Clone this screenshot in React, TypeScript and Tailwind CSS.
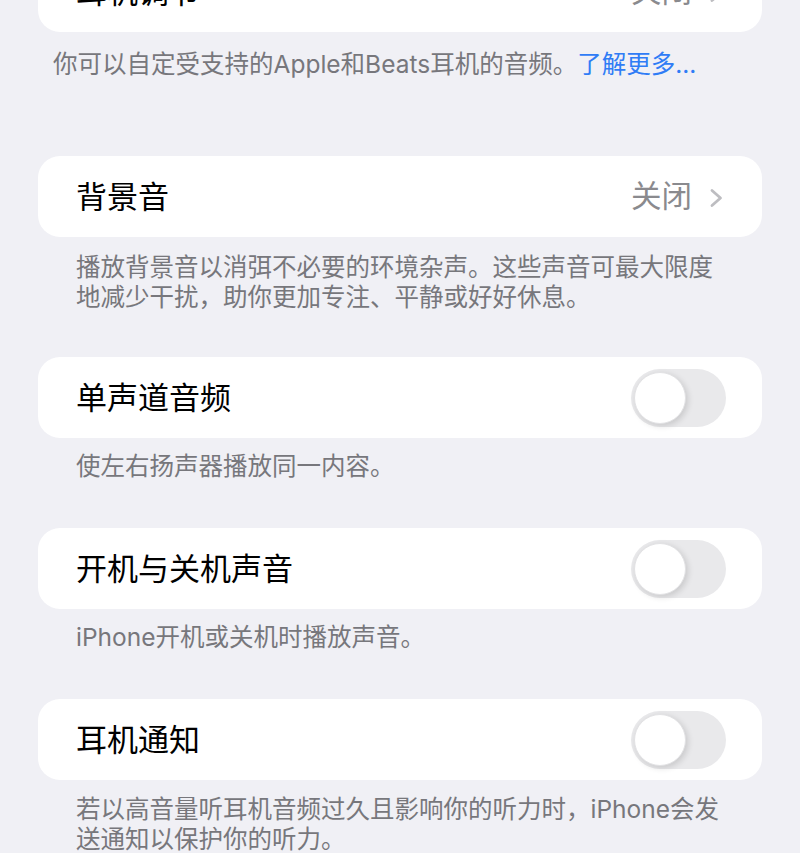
const font = { fontFamily: 'Inter, "Noto Sans CJK SC", sans-serif' };

function Toggle() {
  return (
    <div className="flex h-[58px] w-[95px] items-center rounded-full bg-[#e9e9eb] p-[3px]">
      <div className="h-[52px] w-[52px] rounded-full border border-[#e2e2e4] bg-white shadow-[2px_2px_6px_rgba(0,0,0,0.14)]" />
    </div>
  );
}

function Card({ title, right }: { title: string; right: React.ReactNode }) {
  return (
    <div className="mx-[38px] flex h-[81px] items-center justify-between rounded-[22px] bg-white pl-[38px] pr-[36px]">
      <span className="text-[31px] leading-none text-black">{title}</span>
      {right}
    </div>
  );
}

// "关闭 >" disclosure value
function Value({ label }: { label: string }) {
  return (
    <div className="flex items-center gap-[17px] pr-[2px] text-[#8a8a8e]">
      <span className="text-[30.5px] leading-none">{label}</span>
      <svg width="15" height="20" viewBox="0 0 15 20" fill="none" className="mt-[2px]">
        <polyline
          points="3,2.5 11.5,10 3,17.5"
          stroke="#bdbdc1"
          strokeWidth="2.8"
          strokeLinecap="round"
          strokeLinejoin="round"
        />
      </svg>
    </div>
  );
}

function Caption({ children, className = '' }: { children: React.ReactNode; className?: string }) {
  return (
    <p className={`mx-[38px] pl-[38px] pr-[30px] text-[24.5px] leading-[30px] text-[#77777c] ${className}`}>
      {children}
    </p>
  );
}

export default function App() {
  return (
    <div className="h-[853px] overflow-hidden bg-[#f0f0f5]" style={font}>
      <div className="-mt-[49px]">
        <Card title="耳机调节" right={<Value label="关闭" />} />
      </div>
      <p className="mx-[38px] mt-[17px] pl-[15px] text-[24.5px] leading-[30px] text-[#77777c]">
        你可以自定受支持的Apple和Beats耳机的音频。<span className="text-[#2f7cf6]">了解更多...</span>
      </p>

      <div className="mt-[77px]">
        <Card title="背景音" right={<Value label="关闭" />} />
        <Caption className="mt-[15px]">
          播放背景音以消弭不必要的环境杂声。这些声音可最大限度地减少干扰，助你更加专注、平静或好好休息。
        </Caption>
      </div>

      <div className="mt-[45px]">
        <Card title="单声道音频" right={<Toggle />} />
        <Caption className="mt-[13px]">使左右扬声器播放同一内容。</Caption>
      </div>

      <div className="mt-[47px]">
        <Card title="开机与关机声音" right={<Toggle />} />
        <Caption className="mt-[13px]">iPhone开机或关机时播放声音。</Caption>
      </div>

      <div className="mt-[47px]">
        <Card title="耳机通知" right={<Toggle />} />
        <Caption className="mt-[14px]">
          若以高音量听耳机音频过久且影响你的听力时，iPhone会发送通知以保护你的听力。
        </Caption>
      </div>
    </div>
  );
}
